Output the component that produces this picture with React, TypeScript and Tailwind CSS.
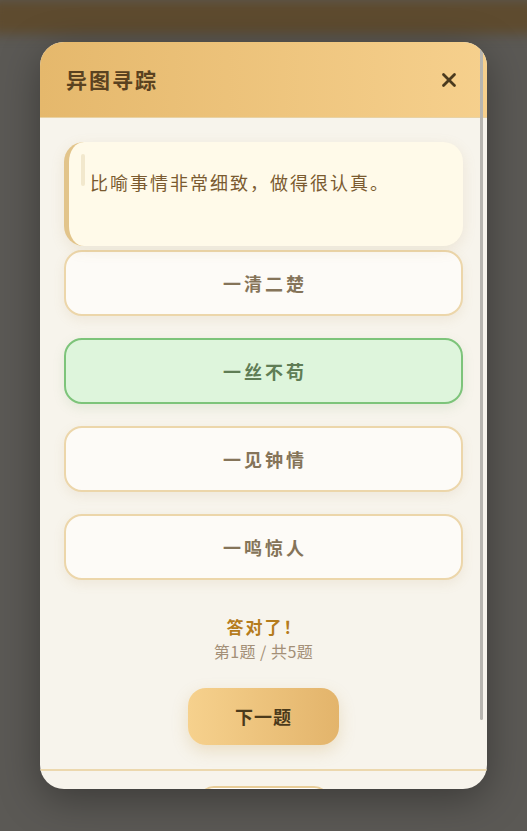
import { X } from 'lucide-react';

const options = [
  { label: '一清二楚', correct: false },
  { label: '一丝不苟', correct: true },
  { label: '一见钟情', correct: false },
  { label: '一鸣惊人', correct: false },
];

const font = { fontFamily: '"Noto Sans CJK SC", "Liberation Serif", serif' };

export default function App() {
  return (
    <div className="w-[527px] h-[831px] overflow-hidden bg-[#5b5955]" style={font}>
      <div className="h-[34px] bg-[#5e4b2f] blur-[6px] -mx-[10px]" />
      <div className="relative mt-[8px] ml-[40px] w-[447px] h-[747px] rounded-[24px] bg-[#f7f4ec] overflow-hidden flex flex-col shadow-[0_10px_40px_rgba(0,0,0,0.35)]">
        <div className="h-[76px] shrink-0 flex items-center justify-between pl-[26px] pr-[27px] bg-gradient-to-r from-[#e5b86c] to-[#f6d08d] border-b border-[#e8d2a4]">
          <span className="text-[21px] font-bold text-[#5a4220] tracking-[2px]">异图寻踪</span>
          <X size={22} strokeWidth={3} className="text-[#4a3a1e]" />
        </div>

        <div className="flex-1 flex flex-col px-[24px] pt-[24px]">
          <div className="relative h-[104px] rounded-[20px] border-l-[5px] border-[#e2c48a] bg-[#fffae9] shadow-[0_4px_14px_rgba(180,150,90,0.15)] pl-[21px] pt-[26px]">
            <div className="absolute left-[12px] top-[12px] w-[4px] h-[32px] rounded-full bg-[#f2e8cd]" />
            <p className="text-[18px] text-[#7a5a30] leading-[28px] tracking-[2px]">比喻事情非常细致，做得很认真。</p>
          </div>

          <div className="mt-[4px] flex flex-col gap-[22px]">
            {options.map(({ label, correct }) => (
              <div
                key={label}
                className={
                  correct
                    ? 'h-[66px] rounded-[18px] border-2 border-[#7dc47a] bg-[#def5dc] flex items-center justify-center shadow-[0_4px_12px_rgba(120,170,110,0.15)]'
                    : 'h-[66px] rounded-[18px] border-2 border-[#ecd6aa] bg-[#fdfbf7] flex items-center justify-center shadow-[0_4px_12px_rgba(180,150,90,0.12)]'
                }
              >
                <span
                  className={
                    correct
                      ? 'text-[18px] font-bold tracking-[3px] pl-[3px] text-[#5f7d55]'
                      : 'text-[18px] font-bold tracking-[3px] pl-[3px] text-[#857459]'
                  }
                >
                  {label}
                </span>
              </div>
            ))}
          </div>

          <div className="mt-[34px] flex flex-col items-center">
            <span className="text-[17px] font-bold text-[#b57c1c] leading-[25px] tracking-[2px] pl-[2px]">答对了！</span>
            <span className="text-[16px] text-[#a38f77] leading-[25px] tracking-[0.5px]">第1题 / 共5题</span>
            <button className="mt-[24px] w-[151px] h-[57px] rounded-[18px] bg-gradient-to-r from-[#f6d18d] to-[#e3b46b] text-[18px] font-bold text-[#4b3a1b] tracking-[1px] shadow-[0_6px_16px_rgba(200,160,80,0.25)]">
              下一题
            </button>
          </div>
        </div>

        <div className="h-[20px] shrink-0 border-t-2 border-[#ecd8ae] flex justify-center pt-[15px]">
          <div className="w-[132px] h-[40px] rounded-[16px] border-2 border-[#e8cd98] bg-white" />
        </div>

        <div className="absolute right-[4px] top-[4px] w-[3px] h-[674px] rounded-full bg-[#b8b6b0]" />
      </div>
    </div>
  );
}
